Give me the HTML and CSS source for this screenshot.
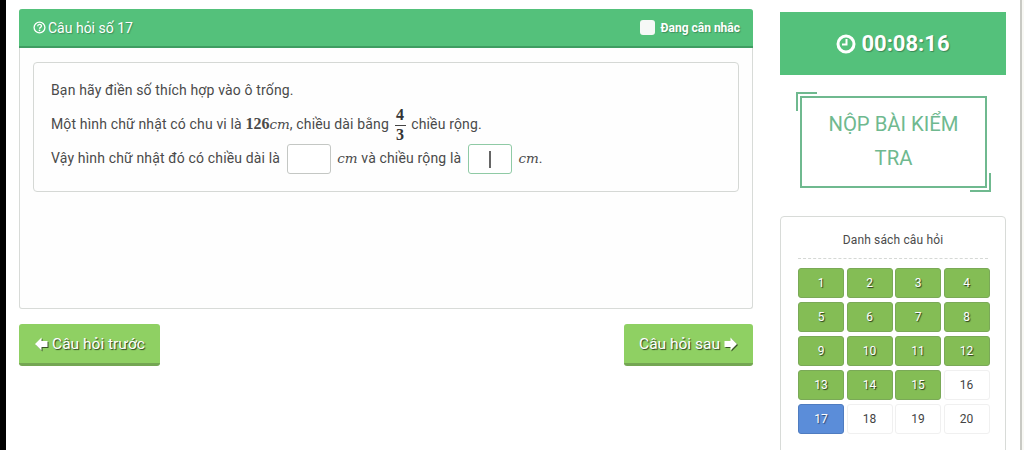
FILE: index.html
```html
<!DOCTYPE html>
<html lang="en">
<head>
    <meta charset="UTF-8">
    <meta name="viewport" content="width=device-width, initial-scale=1.0">
    <title>Câu hỏi số 17</title>
    <link rel="stylesheet" href="styles.css">
</head>
<body>

<div class="strip"></div>

<div class="main">
    <div class="card">
        <div class="card-head">
            <div class="card-title">
                <svg class="help-icon" viewBox="0 0 12 12">
                    <circle cx="6" cy="6" r="5" fill="none" stroke="#fff" stroke-width="1.2"/>
                    <path d="M4.3 4.8c0-2.2 3.5-2.2 3.5-.2 0 1.300-1.800 1.300-1.800 2.600" fill="none" stroke="#fff" stroke-width="1.200"/>
                    <rect x="5.300" y="8" width="1.400" height="1.400" fill="#fff"/>
                </svg>
                <span>Câu hỏi số 17</span>
            </div>
            <label class="flag">
                <span class="flag-box"></span>
                <span>Đang cân nhắc</span>
            </label>
        </div>
        <div class="card-body">
            <div class="question">
                <p class="line">Bạn hãy điền số thích hợp vào ô trống.</p>
                <p class="line">Một hình chữ nhật có chu vi là <b class="num-math">126</b><i class="math">cm</i>, chiều dài bằng
                    <span class="frac"><b>4</b><b>3</b></span> chiều rộng.</p>
                <p class="line">Vậy hình chữ nhật đó có chiều dài là
                    <span class="blank"></span>
                    <i class="math">cm</i> và chiều rộng là
                    <span class="blank blank-active"><span class="caret"></span></span>
                    <i class="math">cm</i>.</p>
            </div>
        </div>
    </div>

    <div class="nav">
        <button class="nav-btn nav-prev">
            <svg class="arrow" viewBox="0 0 14 14"><path d="M7.500.5 1 7l6.500 6.500V10h6V4h-6z" fill="#fff"/></svg>
            Câu hỏi trước
        </button>
        <button class="nav-btn nav-next">
            Câu hỏi sau
            <svg class="arrow" viewBox="0 0 14 14"><path d="M6.500.5 13 7l-6.500 6.500V10H.5V4h6z" fill="#fff"/></svg>
        </button>
    </div>
</div>

<div class="side">
    <div class="timer">
        <svg class="clock" viewBox="0 0 20 20">
            <circle cx="10" cy="10" r="8" fill="none" stroke="#fff" stroke-width="3"/>
            <path d="M10.500 5v5.500H6" fill="none" stroke="#fff" stroke-width="2"/>
        </svg>
        <span>00:08:16</span>
    </div>

    <button class="submit">NỘP BÀI KIỂM TRA</button>

    <div class="list">
        <div class="list-title">Danh sách câu hỏi</div>
        <div class="grid">
            <span class="num done">1</span>
            <span class="num done">2</span>
            <span class="num done">3</span>
            <span class="num done">4</span>
            <span class="num done">5</span>
            <span class="num done">6</span>
            <span class="num done">7</span>
            <span class="num done">8</span>
            <span class="num done">9</span>
            <span class="num done">10</span>
            <span class="num done">11</span>
            <span class="num done">12</span>
            <span class="num done">13</span>
            <span class="num done">14</span>
            <span class="num done">15</span>
            <span class="num">16</span>
            <span class="num current">17</span>
            <span class="num">18</span>
            <span class="num">19</span>
            <span class="num">20</span>
        </div>
    </div>
</div>

<div class="edge"></div>

</body>
</html>
```

FILE: styles.css
```css
body {
    font-family: 'Roboto', 'Liberation Sans', sans-serif;
    background-color: #fff;
    color: #4a4a4a;
    margin: 0;
    height: 450px;
    overflow: hidden;
    display: flex;
    align-items: flex-start;
}

.strip {
    width: 6px;
    height: 450px;
    background-color: #000;
    flex-shrink: 0;
}

.main {
    width: 734px;
    margin-left: 13px;
    margin-top: 9px;
    flex-shrink: 0;
}

.card {
    height: 300px;
    box-sizing: border-box;
    border: 1px solid #d8dbd8;
    border-top: none;
    border-radius: 3px;
    background-color: #fefefe;
}

.card-head {
    height: 39px;
    margin: 0 -1px;
    box-sizing: border-box;
    background-color: #54c17b;
    border-bottom: 2px solid #3f9d62;
    border-radius: 3px 3px 0 0;
    color: #fff;
    display: flex;
    justify-content: space-between;
    align-items: center;
    padding: 0 13px 0 14px;
}

.card-title {
    display: flex;
    align-items: center;
    gap: 2px;
    font-size: 14px;
    text-shadow: 1px 1px 1px rgba(0, 0, 0, 0.25);
}

.help-icon {
    width: 13px;
    height: 13px;
}

.flag {
    display: flex;
    align-items: center;
    gap: 6px;
    font-size: 12px;
    font-weight: bold;
    text-shadow: 1px 1px 1px rgba(0, 0, 0, 0.25);
}

.flag-box {
    width: 15px;
    height: 15px;
    background-color: #f6f8f6;
    border-radius: 3px;
}

.card-body {
    padding: 14px 13px;
}

.question {
    height: 130px;
    box-sizing: border-box;
    border: 1px solid #d5d8d5;
    border-radius: 4px;
    padding: 10px 17px;
}

.line {
    margin: 0;
    height: 34px;
    line-height: 34px;
    font-size: 14px;
    letter-spacing: 0.15px;
    white-space: nowrap;
}

.math {
    font-family: 'DejaVu Serif', serif;
    font-size: 13.5px;
    letter-spacing: 0;
}

.num-math {
    font-family: 'Liberation Serif', serif;
    font-size: 16px;
    letter-spacing: 0;
}

.frac {
    display: inline-block;
    vertical-align: middle;
    width: 11px;
    margin: 0 2px;
    font-family: 'Liberation Serif', serif;
    font-size: 16px;
    line-height: 16px;
    text-align: center;
    color: #333;
}

.frac b {
    display: block;
}

.frac b:first-child {
    border-bottom: 1px solid #444;
    padding-bottom: 2px;
}

.frac b:last-child {
    padding-top: 1px;
}

.blank {
    display: inline-block;
    vertical-align: middle;
    width: 44px;
    height: 30px;
    box-sizing: border-box;
    border: 1px solid #c4c7c4;
    border-radius: 3px;
    background-color: #fff;
    margin: 0 3px;
    line-height: 0;
    text-align: center;
}

.blank-active {
    border-color: #8fcaa5;
}

.caret {
    display: inline-block;
    width: 2px;
    height: 17px;
    margin-top: 6px;
    background-color: #666;
}

.nav {
    display: flex;
    justify-content: space-between;
    margin-top: 15px;
}

.nav-btn {
    height: 42px;
    box-sizing: border-box;
    background-color: #8fd063;
    border: none;
    border-bottom: 3px solid #74a653;
    border-radius: 3px;
    color: #fff;
    font-family: inherit;
    font-size: 15.5px;
    padding: 0;
    display: flex;
    align-items: center;
    justify-content: center;
    gap: 4px;
    text-shadow: 1px 1px 1px rgba(0, 0, 0, 0.7);
}

.nav-prev {
    width: 141px;
}

.nav-next {
    width: 129px;
}

.arrow {
    width: 14px;
    height: 14px;
    filter: drop-shadow(1px 1px 0 rgba(0, 0, 0, 0.6));
}

.side {
    width: 226px;
    height: 438px;
    overflow: hidden;
    margin-left: 27px;
    margin-top: 12px;
    flex-shrink: 0;
}

.timer {
    height: 63px;
    background-color: #54c17b;
    color: #fff;
    font-size: 22px;
    font-weight: bold;
    display: flex;
    align-items: center;
    justify-content: center;
    gap: 5px;
    text-shadow: 1px 1px 1px rgba(0, 0, 0, 0.3);
}

.clock {
    width: 20px;
    height: 20px;
}

.submit {
    position: relative;
    display: block;
    width: 187px;
    height: 92px;
    margin: 21px 0 0 20px;
    box-sizing: border-box;
    background-color: #fff;
    border: 2px solid #6fb98f;
    color: #6fb98f;
    font-family: inherit;
    font-size: 20.3px;
    line-height: 34px;
    padding: 0 20px 2px;
}

/* the two corner brackets sit over the border */
.submit::before,
.submit::after {
    content: "";
    position: absolute;
    width: 19px;
    height: 17px;
}

.submit::before {
    top: -6px;
    left: -6px;
    border-top: 2px solid #6fb98f;
    border-left: 2px solid #6fb98f;
}

.submit::after {
    bottom: -6px;
    right: -6px;
    border-bottom: 2px solid #6fb98f;
    border-right: 2px solid #6fb98f;
}

.list {
    height: 300px;
    margin-top: 28px;
    box-sizing: border-box;
    border: 1px solid #d8dbd8;
    border-radius: 4px;
    padding: 0 17px;
}

.list-title {
    height: 41px;
    line-height: 46px;
    margin-bottom: 9px;
    text-align: center;
    font-size: 12px;
    letter-spacing: 0.15px;
    border-bottom: 1px dashed #d5d8d5;
}

.grid {
    display: grid;
    grid-template-columns: repeat(4, 46px);
    grid-auto-rows: 30px;
    column-gap: 2.500px;
    row-gap: 4px;
}

.num {
    display: flex;
    align-items: center;
    justify-content: center;
    border-radius: 3px;
    font-size: 12px;
    border: 1px solid #f0f0f0;
    box-sizing: border-box;
    color: #444;
}

.done {
    background-color: #84bd55;
    border-color: #7aa957;
    color: #fff;
    text-shadow: 1px 1px 1px rgba(0, 0, 0, 0.7);
}

.current {
    background-color: #5b8dd9;
    border-color: #4f7cc0;
    color: #fff;
    text-shadow: 1px 1px 1px rgba(0, 0, 0, 0.5);
}

.edge {
    flex-grow: 1;
    height: 450px;
    margin-left: 14px;
    border-left: 2px solid #c9cac4;
    background-color: #f8f8f4;
}
```
